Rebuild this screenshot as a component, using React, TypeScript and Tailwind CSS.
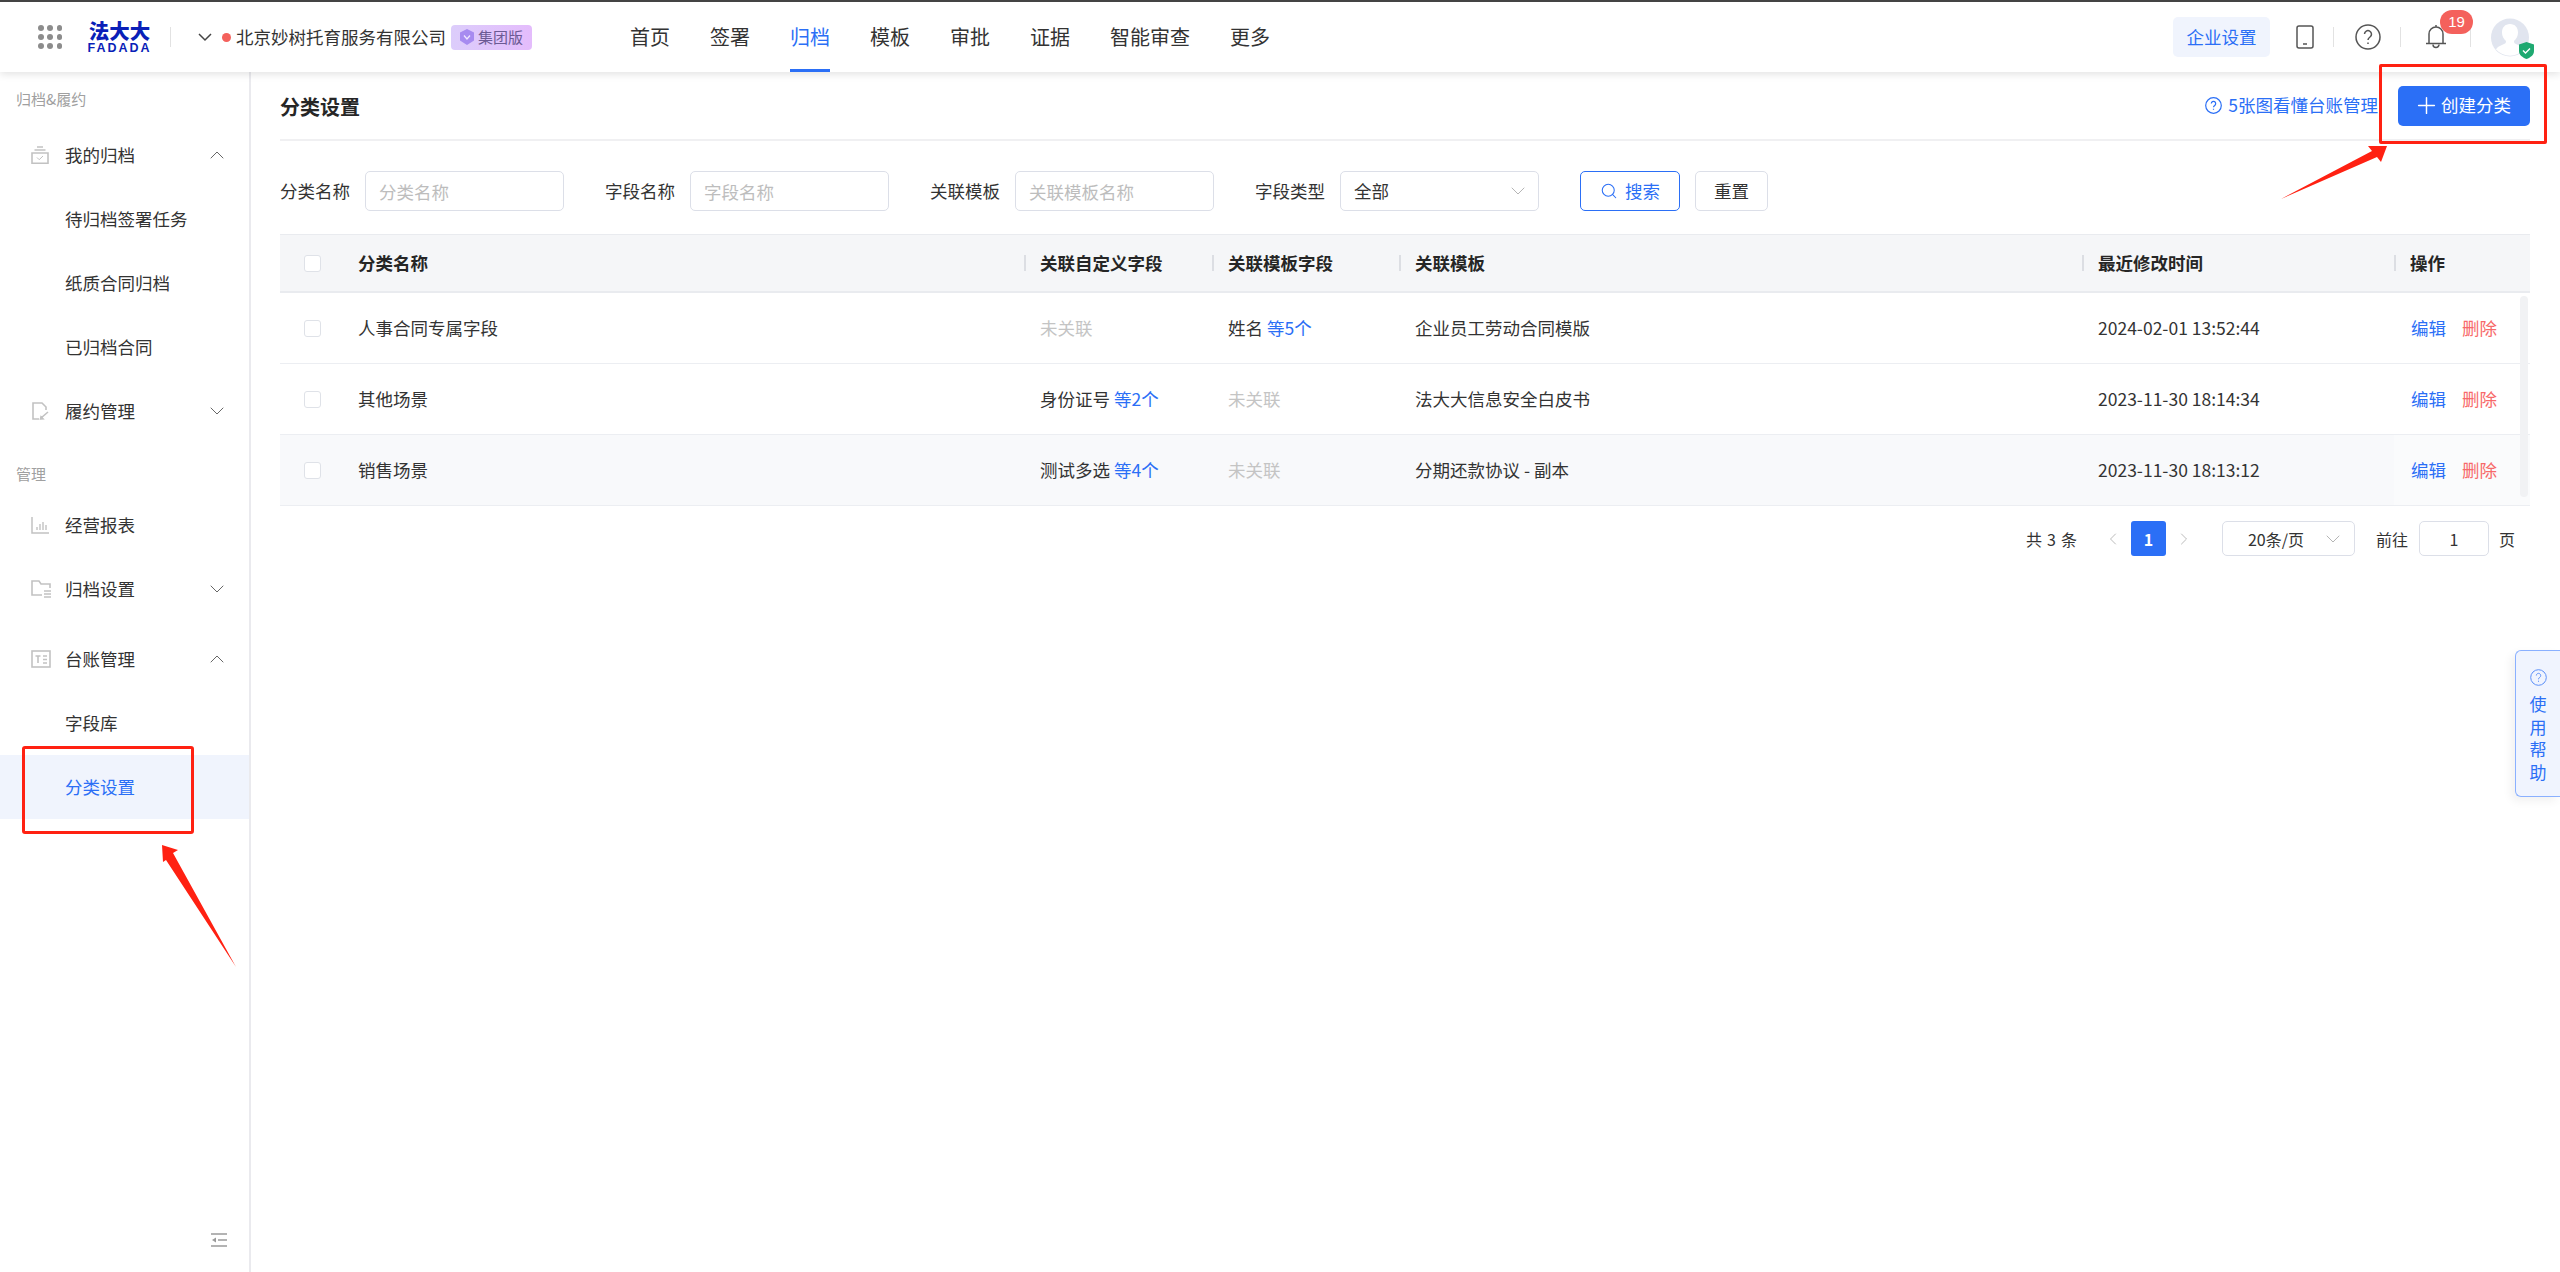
import { ChevronDown, ChevronLeft, ChevronRight, ChevronUp, Plus, Search } from 'lucide-react'

const cjk = '[font-family:"Noto_Sans_CJK_SC","Liberation_Sans",sans-serif]'

const navItems = ['首页', '签署', '归档', '模板', '审批', '证据', '智能审查', '更多']

const columns = 'grid grid-cols-[78px_666px_188px_187px_683px_312px_136px]'

const rows = [
  { name: '人事合同专属字段', custom: null, tpl: ['姓名', '等5个'], template: '企业员工劳动合同模版', time: '2024-02-01 13:52:44', bg: 'bg-white', last: 'bg-white' },
  { name: '其他场景', custom: ['身份证号', '等2个'], tpl: null, template: '法大大信息安全白皮书', time: '2023-11-30 18:14:34', bg: 'bg-white', last: 'bg-white' },
  { name: '销售场景', custom: ['测试多选', '等4个'], tpl: null, template: '分期还款协议 - 副本', time: '2023-11-30 18:13:12', bg: 'bg-[#f8f9fb]', last: 'bg-[#fafbfc]' },
]

function Linked({ value }: { value: string[] | null }) {
  if (!value) return <span className="text-[#c4c4c4]">未关联</span>
  return (
    <span>
      {value[0]} <span className="text-[#2b6ff6]">{value[1]}</span>
    </span>
  )
}

function MenuIcon({ kind }: { kind: string }) {
  const common = { width: 18, height: 18, viewBox: '0 0 18 18', fill: 'none', stroke: '#c2c2c2', strokeWidth: 1.6 }
  if (kind === 'archive') {
    return (
      <svg {...common}>
        <path d="M6 1h6M3.500 4h11M1 7h16v10.300H1z" />
        <path d="M6 11.500l2.200 2.200L12 10" strokeWidth="1" />
      </svg>
    )
  }
  if (kind === 'perform') {
    return (
      <svg {...common}>
        <path d="M8 17H2V1h9l4 4v3" />
        <path d="M10 16l7-6M9.500 17l2.500-.2-2-2z" />
      </svg>
    )
  }
  if (kind === 'report') {
    return (
      <svg {...common}>
        <path d="M1 1v16h17" strokeWidth="1.500" />
        <path d="M6 14v-3M9 14V8M12 14V6M15 14V9" strokeWidth="1.400" />
      </svg>
    )
  }
  if (kind === 'settings') {
    return (
      <svg width="20" height="18" viewBox="0 0 20 18" fill="none" stroke="#c2c2c2" strokeWidth="1.600">
        <path d="M11 15H1V1h7l2 3h9v4" />
        <path d="M13 11h7M13 14h7M13 17h7" />
      </svg>
    )
  }
  return (
    <svg width="20" height="18" viewBox="0 0 20 18" fill="none" stroke="#c2c2c2" strokeWidth="1.600">
      <rect x="1" y="1" width="18" height="16" />
      <path d="M4.500 6h5M7 6v7M12 6h4M12 9.500h4M12 13h4" />
    </svg>
  )
}

function MenuRow({
  icon,
  label,
  open,
  className = '',
}: {
  icon: string
  label: string
  open?: boolean
  className?: string
}) {
  return (
    <div className={`flex h-[64px] items-center text-[17.500px] text-[#333] ${className}`}>
      <div className="ml-[31px] flex w-[20px] shrink-0 justify-start">
        <MenuIcon kind={icon} />
      </div>
      <span className="ml-[14px]">{label}</span>
      {open ? (
        <ChevronUp className="mr-[20px] ml-auto text-[#666]" size={24} strokeWidth={1} />
      ) : (
        <ChevronDown className="mr-[20px] ml-auto text-[#666]" size={24} strokeWidth={1} />
      )}
    </div>
  )
}

function SubRow({ label, active }: { label: string; active?: boolean }) {
  return (
    <div
      className={
        active
          ? 'flex h-[64px] items-center bg-[#f0f4fd] pl-[65px] text-[17.500px] text-[#2b6ff6]'
          : 'flex h-[64px] items-center pl-[65px] text-[17.500px] text-[#333]'
      }
    >
      {label}
    </div>
  )
}

function FilterField({ label, placeholder }: { label: string; placeholder: string }) {
  return (
    <div className="mr-[41px] flex items-center">
      <label className="w-[70px] shrink-0 text-[17.500px] text-[#333]">{label}</label>
      <input
        className="ml-[15px] h-[40px] w-[199px] rounded-[5px] border border-[#dcdfe8] px-[13px] text-[17.500px] outline-none placeholder:text-[#bdbdbd]"
        placeholder={placeholder}
      />
    </div>
  )
}

function Checkbox() {
  return <div className="ml-[24px] h-[17px] w-[17px] rounded-[3px] border border-[#dfe2e8] bg-white" />
}

function HeadCell({ label }: { label: string }) {
  return (
    <div className="flex items-center font-bold">
      <span className="h-[16px] w-[2px] bg-[#dcdee3]" />
      <span className="ml-[14px]">{label}</span>
    </div>
  )
}

export default function App() {
  return (
    <div className={`relative h-[1272px] w-[2560px] overflow-hidden bg-white ${cjk}`}>
      <header className="relative z-10 flex h-[72px] items-center border-t-[2px] border-[#444] bg-white shadow-[0_2px_8px_rgba(0,0,0,0.12)]">
        <div className="ml-[38px] grid w-[24px] grid-cols-3 gap-x-[4px] gap-y-[3.500px]">
          {Array.from({ length: 9 }).map((_, i) => (
            <span key={i} className="h-[5.500px] w-[5.500px] rounded-full bg-[#8c8c8c]" />
          ))}
        </div>
        <div className="ml-[27px] flex w-[61px] flex-col items-center text-[#0a1fb8]">
          <span className="text-[20.500px] leading-[19px] font-black whitespace-nowrap">法大大</span>
          <span className="mt-[3px] font-['Liberation_Sans'] text-[12.500px] leading-[11px] font-bold tracking-[2px] whitespace-nowrap">
            FADADA
          </span>
        </div>
        <span className="ml-[20px] h-[20px] w-[1px] bg-[#e2e2e2]" />
        <svg className="ml-[27px]" width="14" height="9" viewBox="0 0 14 9" fill="none" stroke="#444" strokeWidth="1.500">
          <path d="M1 1l6 6 6-6" />
        </svg>
        <span className="ml-[10px] h-[9px] w-[9px] rounded-full bg-[#f4615c]" />
        <span className="ml-[5px] text-[17.500px] text-[#333]">北京妙树托育服务有限公司</span>
        <div className="ml-[5px] flex h-[25px] w-[81px] items-center rounded-[4px] bg-gradient-to-r from-[#dccdfb] to-[#e4bcfc] pl-[8px] text-[15px] text-[#6c5a94]">
          <svg width="16" height="18" viewBox="0 0 16 18" fill="#a78bf0">
            <path d="M8 1l7 3.500v8L8 17l-7-4.500v-8z" />
            <path d="M5 7.500L8 11l3-3.500" fill="none" stroke="#f0e6ff" strokeWidth="1.300" />
          </svg>
          <span className="ml-[3px]">集团版</span>
        </div>
        <nav className="ml-[98px] flex h-full items-center gap-[40px]">
          {navItems.map((item) => (
            <div
              key={item}
              className={
                item === '归档'
                  ? 'relative flex h-full items-center text-[20px] text-[#2b6ff6]'
                  : 'flex h-full items-center text-[20px] text-[#333]'
              }
            >
              {item}
              {item === '归档' ? <span className="absolute right-0 bottom-0 left-0 h-[3px] bg-[#2b6ff6]" /> : null}
            </div>
          ))}
        </nav>
        <div className="ml-auto flex items-center pr-[31px]">
          <div className="flex h-[40px] w-[97px] items-center justify-center rounded-[5px] bg-[#f0f4fd] text-[17.500px] text-[#2b6ff6]">
            企业设置
          </div>
          <svg className="ml-[26px]" width="18" height="24" viewBox="0 0 18 24" fill="none" stroke="#555" strokeWidth="1.500">
            <rect x="1" y="1" width="16" height="22" rx="2" />
            <path d="M7 19h4" />
          </svg>
          <span className="ml-[19px] h-[20px] w-[1px] bg-[#e2e2e2]" />
          <svg className="ml-[21px]" width="26" height="26" viewBox="0 0 26 26" fill="none" stroke="#555" strokeWidth="1.500">
            <circle cx="13" cy="13" r="12" />
            <path d="M9.500 10a3.500 3.500 0 1 1 5.500 3c-1.300.9-2 1.500-2 3" />
            <path d="M13 18.500v1.500" />
          </svg>
          <span className="ml-[19px] h-[20px] w-[1px] bg-[#e2e2e2]" />
          <div className="relative ml-[24px] h-[26px] w-[22px]">
            <svg width="22" height="26" viewBox="0 0 22 26" fill="none" stroke="#555" strokeWidth="1.500">
              <path d="M11 1v2.500M4 19V10a7 7 0 0 1 14 0v9M1 19.500h20" />
              <path d="M8 20.500a3 3 0 0 0 6 0" />
            </svg>
            <span className="absolute top-[-14px] left-[15px] flex h-[24px] w-[33px] items-center justify-center rounded-full bg-[#f4615c] font-['Liberation_Sans'] text-[15px] text-white">
              19
            </span>
          </div>
          <span className="ml-[23px] h-[20px] w-[1px] bg-[#e2e2e2]" />
          <div className="relative ml-[20px] h-[39px] w-[38px]">
            <svg width="38" height="39" viewBox="0 0 38 39">
              <circle cx="19" cy="19.500" r="19" fill="#e1e5ef" />
              <path d="M19 6c5 0 8 3.500 8 8.500 0 3.500-1.500 6.500-4 8.500 0 2 .5 2.500 3 3.500 4 1.500 6 3 7 5a19 19 0 0 1-28 0c1-2 3-3.500 7-5 2.500-1 3-1.500 3-3.500-2.500-2-4-5-4-8.500C11 9.500 14 6 19 6z" fill="#fff" />
            </svg>
            <svg className="absolute right-[-5px] bottom-[-2px]" width="15" height="17" viewBox="0 0 15 17">
              <path d="M7.500 0L15 2.500v6.500c0 4-3.500 6.500-7.500 8C3.500 15.500 0 13 0 9V2.500z" fill="#1fa971" />
              <path d="M4 8.500l2.500 2.500L11 6.500" fill="none" stroke="#fff" strokeWidth="1.400" />
            </svg>
          </div>
        </div>
      </header>

      <div className="flex h-[1200px]">
        <aside className="relative w-[251px] shrink-0 border-r-[2px] border-[#eaeaee] pt-[17px]">
          <div className="flex h-[20px] items-center pl-[16px] text-[15px] text-[#a0a0a0]">归档&履约</div>
          <MenuRow className="mt-[14px]" icon="archive" label="我的归档" open />
          <SubRow label="待归档签署任务" />
          <SubRow label="纸质合同归档" />
          <SubRow label="已归档合同" />
          <MenuRow icon="perform" label="履约管理" />
          <div className="mt-[21px] flex h-[20px] items-center pl-[16px] text-[15px] text-[#a0a0a0]">管理</div>
          <div className="mt-[9px] flex h-[64px] items-center text-[17.500px] text-[#333]">
            <div className="ml-[31px] flex w-[20px] shrink-0">
              <MenuIcon kind="report" />
            </div>
            <span className="ml-[14px]">经营报表</span>
          </div>
          <MenuRow icon="settings" label="归档设置" />
          <MenuRow className="mt-[6px]" icon="ledger" label="台账管理" open />
          <SubRow label="字段库" />
          <SubRow label="分类设置" active />
          <svg className="absolute bottom-[25px] left-[211px]" width="16" height="14" viewBox="0 0 16 14" fill="none" stroke="#9a9a9a" strokeWidth="1.300">
            <path d="M0 1h16M7 7h9M0 13h16" />
            <path d="M5 4.500v5L1 7z" fill="#9a9a9a" stroke="none" />
          </svg>
        </aside>

        <main className="min-w-0 flex-1 pr-[30px] pl-[29px] text-[17.500px] text-[#333]">
          <div className="flex h-[69px] items-center border-b-[2px] border-[#f0f0f2]">
            <h1 className="mt-[2px] text-[20px] font-bold text-[#262626]">分类设置</h1>
            <div className="ml-auto flex items-center text-[#2b6ff6]">
              <svg width="17" height="17" viewBox="0 0 17 17" fill="none" stroke="#2b6ff6" strokeWidth="1.200">
                <circle cx="8.500" cy="8.500" r="7.800" />
                <path d="M6.300 6.500a2.200 2.200 0 1 1 3.400 1.900c-.8.500-1.200.9-1.200 1.900M8.500 11.700v1.100" />
              </svg>
              <span className="ml-[6px]">5张图看懂台账管理</span>
            </div>
            <button className="ml-[20px] flex h-[40px] w-[132px] items-center rounded-[5px] bg-[#2b6ff6] pl-[15px] text-white">
              <Plus size={27} strokeWidth={1.3} />
              <span className="ml-[1px]">创建分类</span>
            </button>
          </div>

          <div className="mt-[30px] flex h-[40px] items-center">
            <FilterField label="分类名称" placeholder="分类名称" />
            <FilterField label="字段名称" placeholder="字段名称" />
            <FilterField label="关联模板" placeholder="关联模板名称" />
            <label className="w-[70px] shrink-0">字段类型</label>
            <div className="ml-[15px] flex h-[40px] w-[199px] items-center rounded-[5px] border border-[#dcdfe8] pr-[8px] pl-[13px]">
              全部
              <ChevronDown className="ml-auto text-[#b5b5b5]" size={24} strokeWidth={1} />
            </div>
            <button className="ml-[41px] flex h-[40px] w-[100px] items-center justify-center rounded-[5px] border border-[#2b6ff6] text-[#2b6ff6]">
              <Search size={18} strokeWidth={1.4} />
              <span className="ml-[7px]">搜索</span>
            </button>
            <button className="ml-[15px] h-[40px] w-[73px] rounded-[5px] border border-[#dcdfe8]">重置</button>
          </div>

          <div className="relative mt-[23px]">
            <div className={`${columns} h-[59px] items-center border-t border-b-[2px] border-[#e9ebef] bg-[#f5f6f8] text-[#262626]`}>
              <Checkbox />
              <div className="font-bold">分类名称</div>
              <HeadCell label="关联自定义字段" />
              <HeadCell label="关联模板字段" />
              <HeadCell label="关联模板" />
              <HeadCell label="最近修改时间" />
              <HeadCell label="操作" />
            </div>
            {rows.map((row) => (
              <div key={row.name} className={`${columns} h-[71px] items-stretch border-b border-[#eceef2] ${row.bg}`}>
                <div className="flex items-center">
                  <Checkbox />
                </div>
                <div className="flex items-center">{row.name}</div>
                <div className="flex items-center pl-[16px]">
                  <Linked value={row.custom} />
                </div>
                <div className="flex items-center pl-[16px]">
                  <Linked value={row.tpl} />
                </div>
                <div className="flex items-center pl-[16px]">{row.template}</div>
                <div className="flex items-center pl-[16px]">{row.time}</div>
                <div className={`flex items-center pl-[17px] ${row.last}`}>
                  <span className="text-[#2b6ff6]">编辑</span>
                  <span className="ml-[16px] text-[#f76a6a]">删除</span>
                </div>
              </div>
            ))}
            <div className="absolute top-[62px] right-[2px] h-[201px] w-[8px] rounded-full bg-[#f1f2f4]" />
          </div>

          <div className="mt-[15px] flex h-[35px] items-center justify-end pr-[15px] text-[16px]">
            <span>
              共<span className="mx-[5px]">3</span>条
            </span>
            <ChevronLeft className="ml-[26px] text-[#b5b5b5]" size={20} strokeWidth={1.1} />
            <div className="ml-[8px] flex h-[35px] w-[35px] items-center justify-center rounded-[3px] bg-[#2b6ff6] font-bold text-white">
              1
            </div>
            <ChevronRight className="ml-[8px] text-[#b5b5b5]" size={20} strokeWidth={1.1} />
            <div className="ml-[28px] flex h-[35px] w-[133px] items-center rounded-[5px] border border-[#dcdfe8] pr-[9px] pl-[25px]">
              20条/页
              <ChevronDown className="ml-auto text-[#b5b5b5]" size={24} strokeWidth={1} />
            </div>
            <span className="ml-[21px]">前往</span>
            <div className="ml-[11px] flex h-[35px] w-[70px] items-center justify-center rounded-[5px] border border-[#dcdfe8]">
              1
            </div>
            <span className="ml-[10px]">页</span>
          </div>
        </main>
      </div>

      <div className="absolute top-[650px] right-0 flex h-[147px] w-[45px] flex-col items-center rounded-l-[6px] border border-r-0 border-[#8ab0ff] bg-[#f0f4fe] pt-[18px] text-[17px] leading-[22.500px] text-[#2b6ff6] shadow-[-4px_4px_10px_rgba(0,0,0,0.06)]">
        <svg className="mb-[7px]" width="17" height="17" viewBox="0 0 17 17" fill="none" stroke="#5b8ff8" strokeWidth="1">
          <circle cx="8.500" cy="8.500" r="7.800" />
          <path d="M6.300 6.500a2.200 2.200 0 1 1 3.400 1.900c-.8.500-1.200.9-1.200 1.900M8.500 11.700v1.100" />
        </svg>
        <span>使</span>
        <span>用</span>
        <span>帮</span>
        <span>助</span>
      </div>

      {/* red annotations drawn over the screenshot */}
      <div className="absolute top-[64px] left-[2379px] z-20 h-[80px] w-[168px] rounded-[2px] border-[3px] border-[#ff2112]" />
      <div className="absolute top-[746px] left-[22px] z-20 h-[88px] w-[172px] rounded-[3px] border-[3px] border-[#ff2112]" />
      <svg className="pointer-events-none absolute inset-0 z-20" width="2560" height="1272" viewBox="0 0 2560 1272" fill="#ff2112">
        <polygon points="2281,199 2372,151 2368,146 2387,146 2381,162 2377,157" />
        <polygon points="162,845 178,850 173,853 236,967 166,860 163,862" />
      </svg>
    </div>
  )
}
